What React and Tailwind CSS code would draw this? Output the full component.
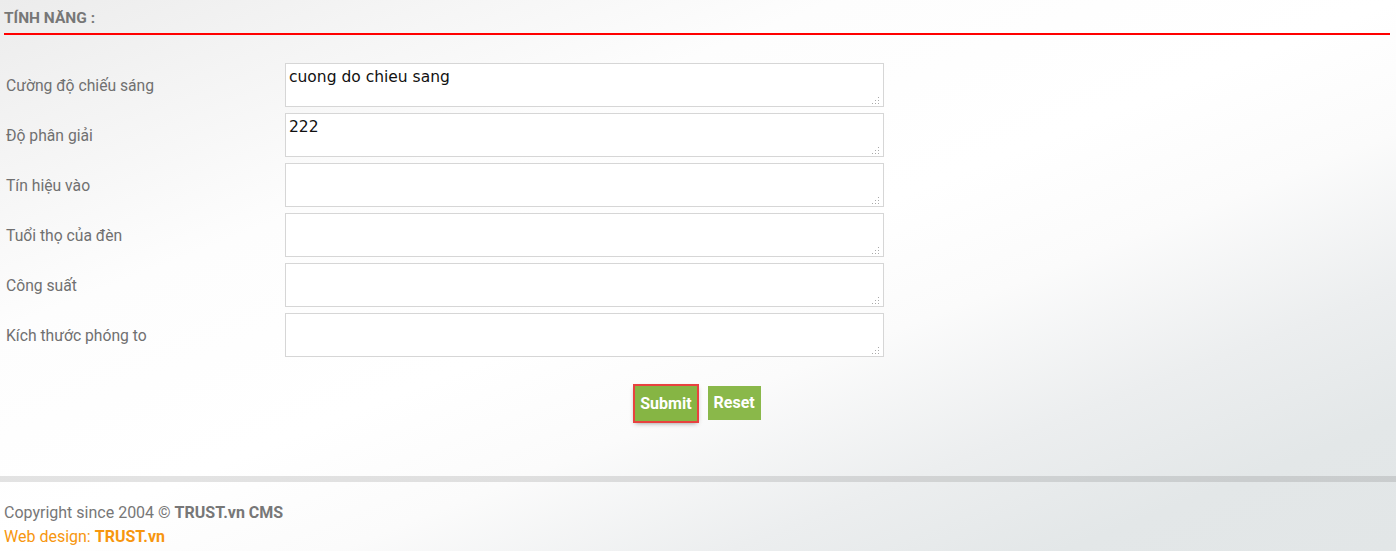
import { useState } from "react";

const fields = [
  { label: "Cường độ chiếu sáng", value: "cuong do chieu sang" },
  { label: "Độ phân giải", value: "222" },
  { label: "Tín hiệu vào", value: "" },
  { label: "Tuổi thọ của đèn", value: "" },
  { label: "Công suất", value: "" },
  { label: "Kích thước phóng to", value: "" },
];

// dotted resize grip like the old browser style
const Grip = () => (
  <svg className="absolute right-[4px] bottom-[3px] pointer-events-none" width="8" height="7" viewBox="0 0 8 7">
    <rect x="6" y="0" width="1" height="1" fill="#aaa" />
    <rect x="3" y="3" width="1" height="1" fill="#aaa" />
    <rect x="6" y="3" width="1" height="1" fill="#aaa" />
    <rect x="0" y="6" width="1" height="1" fill="#aaa" />
    <rect x="3" y="6" width="1" height="1" fill="#aaa" />
    <rect x="6" y="6" width="1" height="1" fill="#aaa" />
  </svg>
);

const App = () => {
  const [values, setValues] = useState(fields.map((f) => f.value));

  return (
    <div className="min-h-[551px] w-full font-['Roboto',sans-serif] bg-[linear-gradient(to_bottom_right,#ececec_0%,#fdfdfd_30%,#ffffff_50%,#fbfbfb_62%,#eceeef_76%,#e3e7e8_88%,#e2e6e7_100%)]">
      <div className="ml-[4px] mr-[6px] h-[35px] border-b-2 border-[#ff0000] pt-[9px]">
        <p className="text-[15.5px] font-bold text-[#777] leading-[18px]">TÍNH NĂNG :</p>
      </div>

      <form className="mt-[28px]" onSubmit={(e) => e.preventDefault()}>
        {fields.map((item, index) => (
          <div key={index} className="flex items-center mb-[6px]">
            <label className="w-[285px] pl-[6px] pt-[1px] text-[15.7px] text-[#707070]">{item.label}</label>
            <div className="relative">
              <textarea
                value={values[index]}
                onChange={(e) => {
                  const next = [...values];
                  next[index] = e.target.value;
                  setValues(next);
                }}
                className="block w-[599px] h-[44px] resize-none border border-[#d6d6d6] bg-white px-[3px] pt-[3px] text-[15.5px] leading-[20px] text-[#111] font-['DejaVu_Sans',sans-serif] outline-none"
              />
              <Grip />
            </div>
          </div>
        ))}

        <div className="flex justify-center gap-[11px] mt-[29px]">
          <button
            type="submit"
            className="h-[35px] px-[5px] bg-[#86b544] text-white font-bold text-[16px] outline-2 outline-[#e8423f] shadow-[0_2px_5px_rgba(0,0,0,0.45)]"
          >
            Submit
          </button>
          <button type="reset" className="h-[34px] px-[6px] bg-[#8ab84a] text-white font-bold text-[16px]">
            Reset
          </button>
        </div>
      </form>

      <div className="mt-[55px] h-[6px] bg-black/[0.11]"></div>

      <div className="pt-[19px] pl-[4px] text-[16px] leading-[24px]">
        <p className="text-[#777]">
          Copyright since 2004 © <span className="font-bold">TRUST.vn CMS</span>
        </p>
        <p className="text-[#f7960e]">
          Web design: <span className="font-bold">TRUST.vn</span>
        </p>
      </div>
    </div>
  );
};

export default App;
